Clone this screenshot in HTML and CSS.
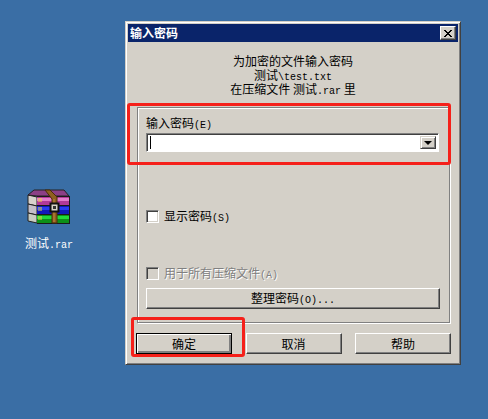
FILE: index.html
```html
<!DOCTYPE html>
<html lang="zh-CN">
<head>
  <meta charset="UTF-8" />
  <meta name="viewport" content="width=device-width, initial-scale=1.0" />
  <title>输入密码</title>
  <link rel="stylesheet" href="styles.css">
</head>
<body>
  <div class="desktop">
    <div class="file-icon">
      <svg class="rar-icon" width="44" height="36" viewBox="0 0 44 36">
        <!-- spines -->
        <path d="M1 7 L10 9 V18 L1 16 Z" fill="#d8d2cc" stroke="#222"/>
        <path d="M1 16 L10 18 V27 L1 25 Z" fill="#c4bfc8" stroke="#222"/>
        <path d="M1 25 L10 27 V35 L1 33 Z" fill="#c8ccc0" stroke="#222"/>
        <!-- top book -->
        <path d="M1 7 L7 2 H37 L42 8 H10 Z" fill="#8c3f86" stroke="#222"/>
        <rect x="10" y="9" width="32" height="8" fill="#b23a98"/>
        <rect x="10" y="10" width="32" height="3" fill="#e27ccb"/>
        <path d="M12 10v4M14 10v4" stroke="#e8d840"/>
        <!-- middle book -->
        <rect x="10" y="18" width="32" height="8" fill="#1218b8"/>
        <rect x="10" y="19" width="32" height="3" fill="#2a3cf0"/>
        <path d="M12 19v4M14 19v4" stroke="#e8d840"/>
        <!-- bottom book -->
        <rect x="10" y="27" width="32" height="8" fill="#0c9018"/>
        <rect x="10" y="28" width="32" height="3" fill="#22d838"/>
        <path d="M12 28v4M14 28v4" stroke="#e8d840"/>
        <path d="M10 17.5H43M10 26.5H43M10 35.5H43M42.5 8V36M10 8.5H43" stroke="#1a1a1a" fill="none"/>
        <!-- strap -->
        <path d="M18 2 H23 L30 9 V35 H25 V11 Z" fill="#8f5f20" stroke="#4a2c08"/>
        <path d="M27 11V34" stroke="#c08a40"/>
        <!-- buckle -->
        <rect x="23.5" y="15.5" width="8" height="8" fill="#d8d4c8" stroke="#111" stroke-width="2"/>
        <rect x="26" y="18" width="3" height="3" fill="#333"/>
      </svg>
      <div class="file-name">测试<span class="lat">.rar</span></div>
    </div>

    <div class="dialog">
      <div class="titlebar">
        <span>输入密码</span>
        <button class="close-btn">
          <svg width="8" height="7" viewBox="0 0 8 7"><path d="M0 0h2v1h1v1h2V1h1V0h2v1H7v1H6v1H5v1h1v1h1v1h1v1H6V6H5V5H3v1H2v1H0V6h1V5h1V4h1V3H2V2H1V1H0z" fill="#000"/></svg>
        </button>
      </div>

      <div class="info">
        <div>为加密的文件输入密码</div>
        <div>测试<span class="lat">\test.txt</span></div>
        <div>在压缩文件 测试<span class="lat">.rar</span> 里</div>
      </div>

      <div class="group">
        <label class="field-label">输入密码<span class="lat">(E)</span></label>
        <div class="combo">
          <div class="combo-input"><i class="caret"></i></div>
          <div class="combo-arrow"><i class="arrow"></i></div>
        </div>
        <div class="check-row show-pass">
          <span class="check"></span>
          <span>显示密码<span class="lat">(S)</span></span>
        </div>
        <div class="check-row disabled">
          <span class="check"></span>
          <span>用于所有压缩文件<span class="lat">(A)</span></span>
        </div>
        <button class="btn organize">整理密码<span class="lat">(O)...</span></button>
      </div>

      <div class="actions">
        <button class="btn default">确定</button>
        <button class="btn">取消</button>
        <button class="btn">帮助</button>
      </div>
    </div>

    <div class="mark mark-field"></div>
    <div class="mark mark-ok"></div>
  </div>
</body>
</html>
```

FILE: styles.css
```css
* {
  box-sizing: border-box;
}
html, body {
  margin: 0;
  height: 100%;
}
body {
  font-family: "Noto Sans CJK SC", "Liberation Sans", sans-serif;
  font-size: 12px;
  line-height: 14px;
  color: #000;
}
.lat {
  font-family: "Liberation Mono", monospace;
  font-size: 10px;
  line-height: 1;
}
.desktop {
  position: relative;
  width: 488px;
  height: 419px;
  overflow: hidden;
  background: #3a6ea5;
}

/* desktop icon */
.file-icon {
  position: absolute;
  left: 17px;
  top: 188px;
  width: 64px;
  text-align: center;
  color: #fff;
}
.rar-icon {
  display: block;
  margin: 0 auto;
}
.file-name {
  height: 14px;
  margin-top: 12px;
}

/* dialog */
.dialog {
  position: absolute;
  left: 125px;
  top: 21px;
  width: 336px;
  height: 344px;
  padding: 3px;
  background: #d4d0c8;
  border: 1px solid;
  border-color: #d4d0c8 #404040 #404040 #d4d0c8;
  box-shadow: inset 1px 1px 0 #fff, inset -1px -1px 0 #808080;
  display: flex;
  flex-direction: column;
}
.dialog button {
  font-family: inherit;
  font-size: 12px;
  line-height: 14px;
  color: #000;
}
.titlebar {
  flex: none;
  height: 18px;
  margin: -1px -1px 0 -1px;
  padding: 0 2px;
  background: #0a246a;
  color: #fff;
  font-weight: 700;
  display: flex;
  align-items: center;
  justify-content: space-between;
}
.close-btn {
  width: 16px;
  height: 14px;
  padding: 0;
  background: #d4d0c8;
  border: 1px solid;
  border-color: #fff #404040 #404040 #fff;
  box-shadow: inset -1px -1px 0 #808080;
  display: flex;
  align-items: center;
  justify-content: center;
}
.info {
  flex: none;
  margin-top: 12px;
  text-align: center;
}
.info div {
  height: 14px;
}
.group {
  flex: none;
  margin: 11px 7px 0 8px;
  height: 216px;
  padding: 8px 10px 0 8px;
  border: 1px solid #808080;
  box-shadow: 1px 1px 0 #fff, inset 1px 1px 0 #fff;
  display: flex;
  flex-direction: column;
}
.field-label {
  display: block;
  height: 14px;
}
.combo {
  margin-top: 3px;
  height: 19px;
  display: flex;
  padding: 2px;
  border: 1px solid;
  border-color: #808080 #fff #fff #808080;
  box-shadow: inset 1px 1px 0 #404040;
  background: #fff;
}
.combo-input {
  flex: 1;
  padding-left: 1px;
}
.caret {
  display: block;
  width: 1px;
  height: 13px;
  background: #000;
}
.combo-arrow {
  width: 16px;
  background: #d4d0c8;
  border: 1px solid;
  border-color: #d4d0c8 #404040 #404040 #d4d0c8;
  box-shadow: inset 1px 1px 0 #fff, inset -1px -1px 0 #808080;
  display: flex;
  align-items: center;
  justify-content: center;
}
.arrow {
  width: 0;
  height: 0;
  border-left: 4px solid transparent;
  border-right: 4px solid transparent;
  border-top: 4px solid #000;
}
.check-row {
  display: flex;
  align-items: center;
  gap: 5px;
  height: 13px;
}
.show-pass {
  margin-top: 58px;
}
.disabled {
  margin-top: 44px;
  color: #808080;
  text-shadow: 1px 1px 0 #fff;
}
.check {
  flex: none;
  width: 13px;
  height: 13px;
  background: #fff;
  border: 1px solid;
  border-color: #808080 #fff #fff #808080;
  box-shadow: inset 1px 1px 0 #404040, inset -1px -1px 0 #d4d0c8;
}
.disabled .check {
  background: #d4d0c8;
}
.btn {
  height: 21px;
  padding: 0;
  background: #d4d0c8;
  border: 1px solid;
  border-color: #fff #404040 #404040 #fff;
  box-shadow: inset -1px -1px 0 #808080;
}
.organize {
  flex: none;
  margin-top: 8px;
  width: 294px;
}
.actions {
  flex: none;
  margin: 10px 6px 0 7px;
  display: flex;
  justify-content: space-between;
}
.actions .btn {
  width: 96px;
}
.actions .default {
  border-color: #000;
  box-shadow: inset 1px 1px 0 #fff, inset -2px -2px 0 #808080;
}

/* red annotations */
.mark {
  position: absolute;
  border: 3px solid #f5201a;
  border-radius: 3px;
}
.mark-field {
  left: 127px;
  top: 103px;
  width: 324px;
  height: 62px;
}
.mark-ok {
  left: 131px;
  top: 317px;
  width: 114px;
  height: 40px;
}
```
